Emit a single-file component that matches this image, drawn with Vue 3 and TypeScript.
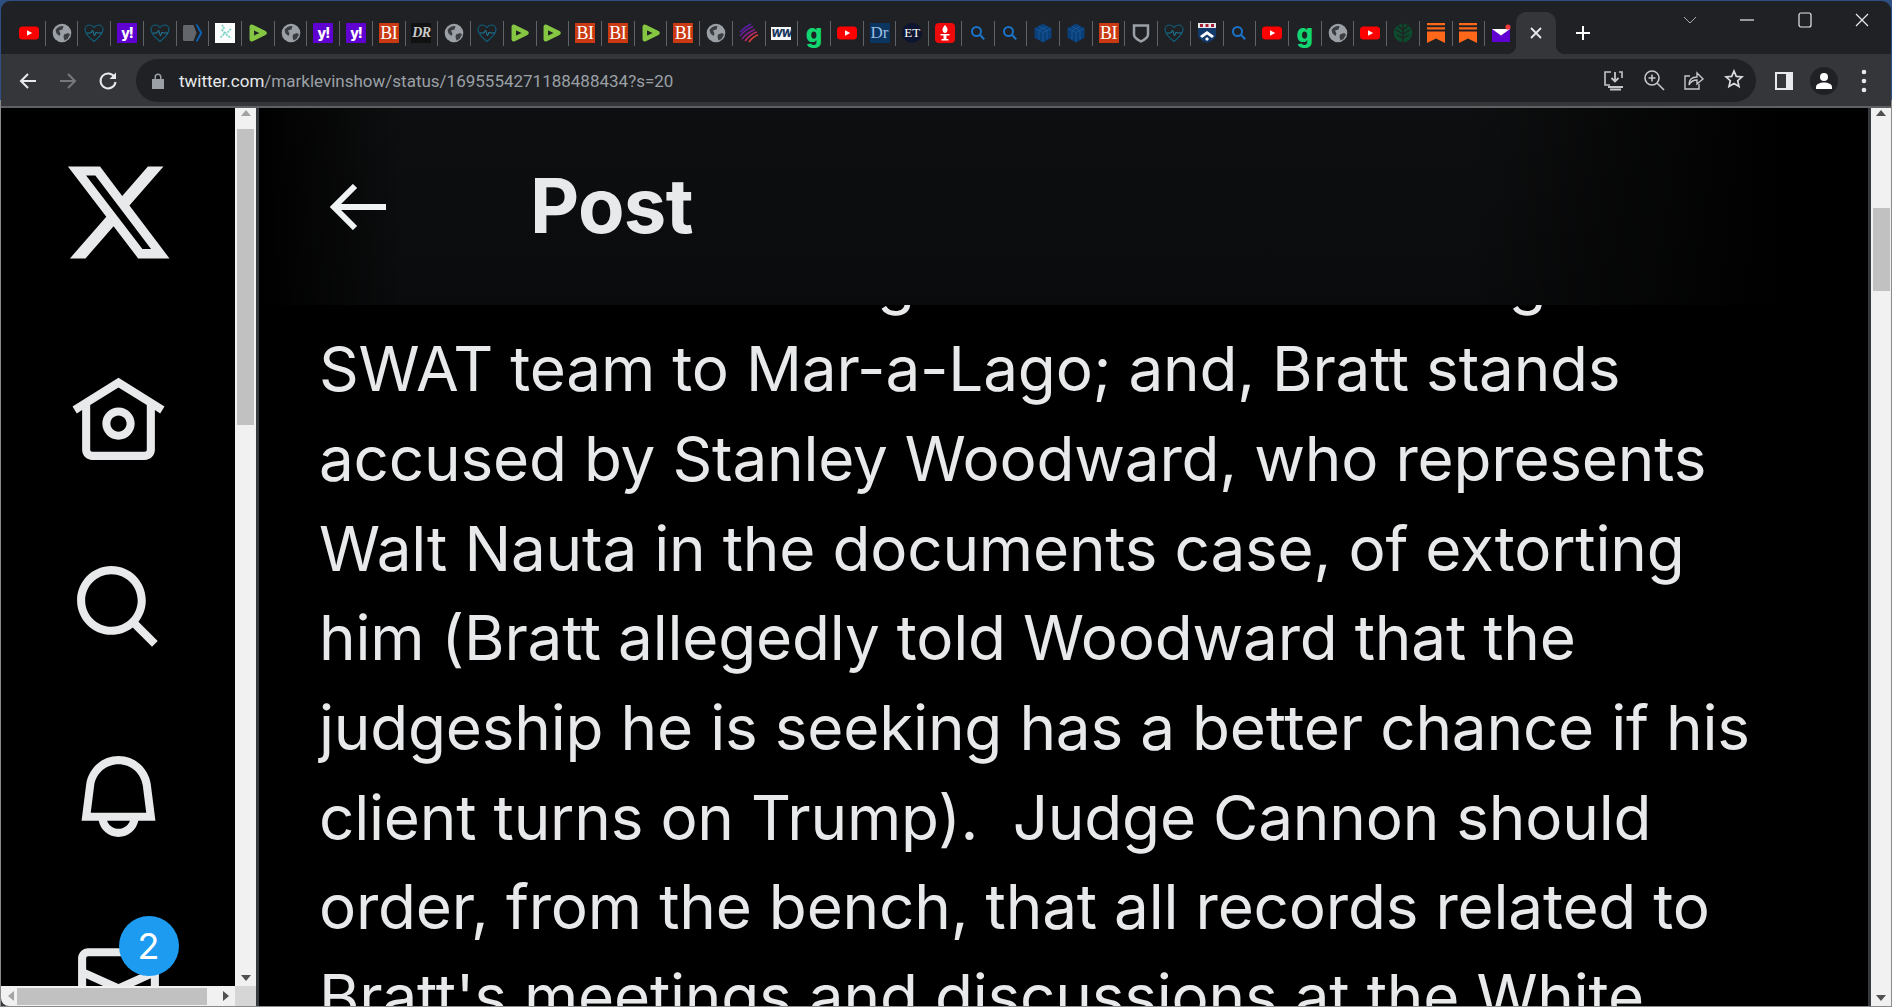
<script setup lang="ts">
// favicon strip, in tab order. Text logos are spans, the rest come from the symbols below.
const tabs: string[] = [
  'yt', 'globe', 'heart', 'yahoo', 'heart', 'arrow', 'crystal', 'rumble', 'globe', 'yahoo',
  'yahoo', 'bi', 'dr-mark', 'globe', 'heart', 'rumble', 'rumble', 'bi', 'bi', 'rumble',
  'bi', 'globe', 'swirl', 'ww', 'g', 'yt', 'dr', 'et', 'torch', 'search',
  'search', 'hex', 'hex', 'bi', 'shield', 'heart', 'crest', 'search', 'yt', 'g',
  'globe', 'yt', 'tree', 'bookmark', 'bookmark', 'mail',
]

const textLogos: Record<string, string> = {
  yahoo: 'y!',
  bi: 'BI',
  'dr-mark': 'DR',
  ww: 'WW',
  g: 'g',
  dr: 'Dr',
  et: 'ET',
}

const lines: string[] = [
  'in the Biden meeting and directed sending',
  'SWAT team to Mar-a-Lago; and, Bratt stands',
  'accused by Stanley Woodward, who represents',
  'Walt Nauta in the documents case, of extorting',
  'him (Bratt allegedly told Woodward that the',
  'judgeship he is seeking has a better chance if his',
  'client turns on Trump).  Judge Cannon should',
  'order, from the bench, that all records related to',
  "Bratt's meetings and discussions at the White",
]
</script>

<template>
  <div class="window">
    <svg class="defs" width="0" height="0" aria-hidden="true">
      <symbol id="fav-yt" viewBox="0 0 20 20">
        <rect x="0" y="3.5" width="20" height="13" rx="3.5" fill="#ff0000" />
        <path d="M8 7.2l5.2 2.8L8 12.8z" fill="#fff" />
      </symbol>
      <symbol id="fav-globe" viewBox="0 0 20 20">
        <circle cx="10" cy="10" r="9.300" fill="#9aa0a6" />
        <path d="M3.500 7c2-3 5-4.500 8-4l-1 3.500-3.500 1 1.500 3-1 2.500-3-2.500zM12 11.500l4-1.500 2 1.500-2.500 4.500-3 1.500-1-3.500z" fill="#3b3d41" />
      </symbol>
      <symbol id="fav-heart" viewBox="0 0 20 20">
        <path d="M10 18.500C5 14.500 1 10.500 1 6.500 1 4 3 2 5.500 2c2 0 3.500 1 4.500 2.500C11 3 12.500 2 14.500 2 17 2 19 4 19 6.500c0 4-4 8-9 12z" fill="none" stroke="#0f5f7c" stroke-width="1.200" />
        <path d="M3 10h4l1.500-3 2 6 1.500-4 1 1h5" fill="none" stroke="#1f7d9d" stroke-width="1" />
      </symbol>
      <symbol id="fav-arrow" viewBox="0 0 20 20">
        <path d="M1 3.500c0-.800.500-1.500 1.500-1.500h9l3 8-3 8h-9c-1 0-1.500-.700-1.500-1.500z" fill="#63666a" />
        <path d="M13.500 1.500l4.500 8.500-4.500 8.500h2l5-8.500-5-8.500z" fill="#0b62b4" />
      </symbol>
      <symbol id="fav-crystal" viewBox="0 0 20 20">
        <rect width="20" height="20" fill="#fdfdfd" />
        <path d="M7 2l2 3-2 2 3 3-3 3-2 2M16 6l-3 3-3 1 3 3 3 2" fill="none" stroke="#7fd3c6" stroke-width="1.800" stroke-dasharray="2 1" />
      </symbol>
      <symbol id="fav-rumble" viewBox="0 0 20 20">
        <path d="M3.800 3.800v12.400L16.500 10z" fill="#202124" stroke="#85c742" stroke-width="4.500" stroke-linejoin="round" />
      </symbol>
      <symbol id="fav-swirl" viewBox="0 0 20 20">
        <g fill="none" stroke-width="1.500">
          <path d="M1 9c4-4 7-6 11-8" stroke="#5b1fa8" />
          <path d="M1 13c4-5 9-8 13-9.500" stroke="#6a1f9c" />
          <path d="M3 16c4-5 9-8 13-9.500" stroke="#8a1f90" />
          <path d="M6 18c4-5 8-8 12-9" stroke="#c02868" />
          <path d="M10 19c3-4 5-6 9-7" stroke="#e0403a" />
        </g>
      </symbol>
      <symbol id="fav-torch" viewBox="0 0 20 20">
        <rect width="20" height="20" rx="4" fill="#ee0a0a" />
        <path d="M10 2c2 2 2.500 3.500 2.500 5 0 1.500-1 3-2.500 3S7.500 8.500 7.500 7c0-1.500.500-3 2.500-5zM5.500 11h9v1.500h-3V16h2v1.500h-7V16h2v-3.500h-3z" fill="#fff" />
      </symbol>
      <symbol id="fav-search" viewBox="0 0 20 20">
        <circle cx="8.500" cy="8.500" r="4.500" fill="none" stroke="#1a73c8" stroke-width="2" />
        <path d="M11.800 11.800l4.400 4.400" stroke="#1a73c8" stroke-width="2.200" />
      </symbol>
      <symbol id="fav-hex" viewBox="0 0 20 20">
        <path d="M10 .5l8.500 4.800v9.400L10 19.500l-8.500-4.800V5.300z" fill="#0b3f78" />
        <path d="M2 5.500l8 4 8-4M10 9.500V19M6 7.500v9M14 7.500v9M6 3.500l8 4M14 3.500l-8 4" fill="none" stroke="#1a5a9e" stroke-width=".900" />
      </symbol>
      <symbol id="fav-shield" viewBox="0 0 20 20">
        <path d="M3 2.500h14v9c0 3-3 5-7 7-4-2-7-4-7-7z" fill="none" stroke="#9aa0a6" stroke-width="2.500" />
      </symbol>
      <symbol id="fav-crest" viewBox="0 0 20 20">
        <path d="M1 0h18v12c0 4-5 6-9 8-4-2-9-4-9-8z" fill="#123a6b" />
        <path d="M1 0h18v5H1z" fill="#e8e8e8" />
        <path d="M3 1h3v3H3zM8.500 1h3v3h-3zM14 1h3v3h-3z" fill="#a31f34" />
        <path d="M3 13l7-5 7 5-2 2-5-3.500L5 15z" fill="#fff" />
        <path d="M10 14l2 2-2 2-2-2z" fill="#fff" />
      </symbol>
      <symbol id="fav-tree" viewBox="0 0 20 20">
        <circle cx="10" cy="10" r="9.300" fill="#0e4a2e" />
        <path d="M10 1v18M10 7L5 3M10 7l5-4M10 11L3 7M10 11l7-4M10 15L4 12M10 15l6-3" fill="none" stroke="#202124" stroke-width="1.300" />
      </symbol>
      <symbol id="fav-bookmark" viewBox="0 0 20 20">
        <path d="M1 0h18v2.300H1zM1 4.300h18v2.300H1zM1 8.500h18V20l-9-4.500L1 20z" fill="#ff6719" />
      </symbol>
      <symbol id="fav-mail" viewBox="0 0 20 20">
        <path d="M1 6h18v13H1z" fill="#5f01d1" />
        <path d="M1 6h18l-9 6.500z" fill="#fff" />
        <circle cx="17" cy="4" r="2.600" fill="#f0393c" />
      </symbol>
    </svg>

    <div class="tabstrip">
      <div class="tabs">
        <template v-for="(kind, i) in tabs" :key="i">
          <div class="tab">
            <span v-if="textLogos[kind]" class="logo-text" :class="'logo-' + kind">{{ textLogos[kind] }}</span>
            <svg v-else class="favicon" viewBox="0 0 20 20"><use :href="'#fav-' + kind" /></svg>
          </div>
          <span v-if="i < tabs.length - 1" class="tab-sep"></span>
        </template>
        <div class="tab-active">
          <svg width="14" height="14" viewBox="0 0 14 14"><path d="M2 2l10 10M12 2L2 12" stroke="#e8eaed" stroke-width="1.800" /></svg>
        </div>
        <div class="new-tab">
          <svg width="16" height="16" viewBox="0 0 16 16"><path d="M8 1v14M1 8h14" stroke="#fff" stroke-width="2" /></svg>
        </div>
      </div>
      <div class="win-controls">
        <div class="win-btn win-chevron">
          <svg width="14" height="8" viewBox="0 0 14 8"><path d="M1 1l6 6 6-6" fill="none" stroke="#a8abaf" stroke-width="1" /></svg>
        </div>
        <div class="win-btn">
          <svg width="14" height="2" viewBox="0 0 14 2"><path d="M0 1h14" stroke="#e8eaed" stroke-width="1.200" /></svg>
        </div>
        <div class="win-btn">
          <svg width="14" height="16" viewBox="0 0 14 16"><rect x="1" y="1" width="12" height="14" rx="2" fill="none" stroke="#e8eaed" stroke-width="1.200" /></svg>
        </div>
        <div class="win-btn">
          <svg width="14" height="14" viewBox="0 0 14 14"><path d="M1 1l12 12M13 1L1 13" stroke="#e8eaed" stroke-width="1.200" /></svg>
        </div>
      </div>
    </div>

    <div class="toolbar">
      <div class="nav-btn">
        <svg width="20" height="20" viewBox="0 0 20 20"><path d="M18 10H3M10 3l-7 7 7 7" fill="none" stroke="#e8eaed" stroke-width="2" /></svg>
      </div>
      <div class="nav-btn">
        <svg width="20" height="20" viewBox="0 0 20 20"><path d="M2 10h15M10 3l7 7-7 7" fill="none" stroke="#76787c" stroke-width="2" /></svg>
      </div>
      <div class="nav-btn">
        <svg width="20" height="20" viewBox="0 0 20 20"><path d="M16.500 6A7.500 7.500 0 1 0 17.500 11" fill="none" stroke="#e8eaed" stroke-width="2" /><path d="M18 1.500V8h-6.500z" fill="#e8eaed" /></svg>
      </div>
      <div class="omnibox">
        <svg class="lock" width="16" height="18" viewBox="0 0 16 18"><path d="M2 7h12v10H2zM4.500 7V5a3.500 3.500 0 0 1 7 0v2" fill="#9aa0a6" /><path d="M6 7V5a2 2 0 0 1 4 0v2z" fill="#202124" /></svg>
        <div class="url"><span class="host">twitter.com</span>/marklevinshow/status/1695554271188488434?s=20</div>
        <div class="omni-actions">
          <div class="omni-btn">
            <svg width="24" height="24" viewBox="0 0 24 24" fill="none" stroke="#c4c7ca" stroke-width="1.600"><path d="M9 3H3v13h5M17 3h3v6" /><path d="M13 3v9M9.500 9l3.500 3.500L16.500 9" stroke-width="1.800" /><path d="M6 18h15M8 20.500h11" stroke-width="2.200" /></svg>
          </div>
          <div class="omni-btn">
            <svg width="22" height="22" viewBox="0 0 22 22" fill="none" stroke="#c4c7ca" stroke-width="1.600"><circle cx="9" cy="9" r="7" /><path d="M14 14l7 7M9 5.500v7M5.500 9h7" /></svg>
          </div>
          <div class="omni-btn">
            <svg width="22" height="22" viewBox="0 0 22 22" fill="none" stroke="#c4c7ca" stroke-width="1.400"><path d="M7 7H2v13h14v-5" /><path d="M6 16c0-5 3-8 8-8V4l6 6-6 5v-4c-3 0-6 1-8 5z" /></svg>
          </div>
          <div class="omni-btn">
            <svg width="20" height="20" viewBox="0 0 20 20"><path d="M10 2l2.300 5.400 5.700.5-4.300 3.800 1.300 5.700-5-3-5 3 1.300-5.700L2 7.900l5.700-.5z" fill="none" stroke="#dadce0" stroke-width="1.700" /></svg>
          </div>
        </div>
      </div>
      <div class="tool-btn tool-first">
        <svg width="18" height="18" viewBox="0 0 18 18"><path d="M0 0h18v18H0z" fill="#e8eaed" /><path d="M2 2h9v14H2z" fill="#35363a" /></svg>
      </div>
      <div class="tool-btn">
        <div class="avatar">
          <svg width="18" height="18" viewBox="0 0 18 18"><circle cx="9" cy="5" r="4" fill="#fff" /><path d="M1 17v-2c0-3 4-4.500 8-4.500s8 1.500 8 4.500v2z" fill="#fff" /></svg>
        </div>
      </div>
      <div class="tool-btn">
        <svg width="6" height="24" viewBox="0 0 6 24" fill="#e8eaed"><circle cx="3" cy="3" r="2.300" /><circle cx="3" cy="12" r="2.300" /><circle cx="3" cy="21" r="2.300" /></svg>
      </div>
    </div>

    <div class="page">
      <aside class="side">
        <div class="side-body">
          <div class="side-content">
            <svg class="x-logo" viewBox="0 0 24 24"><path d="M18.244 2.250h3.308l-7.227 8.260 8.502 11.240H16.170l-5.214-6.817L4.990 21.750H1.680l7.730-8.835L1.254 2.250H8.080l4.713 6.231zm-1.161 17.520h1.833L7.084 4.126H5.117z" /></svg>
            <div class="nav-item">
              <svg viewBox="0 0 24 24"><path d="M12 9c-2.209 0-4 1.791-4 4s1.791 4 4 4 4-1.791 4-4-1.791-4-4-4zm0 6c-1.105 0-2-.895-2-2s.895-2 2-2 2 .895 2 2-.895 2-2 2zm0-13.304L.622 8.807l1.060 1.696L3 9.679V19.500C3 20.881 4.119 22 5.500 22h13c1.381 0 2.500-1.119 2.500-2.500V9.679l1.318.824 1.060-1.696L12 1.696zM19 19.500c0 .276-.224.5-.5.5h-13c-.276 0-.5-.224-.5-.5V8.429l7-4.375 7 4.375V19.500z" /></svg>
            </div>
            <div class="nav-item">
              <svg viewBox="0 0 24 24"><path d="M10.250 3.750c-3.590 0-6.500 2.910-6.500 6.500s2.910 6.500 6.500 6.500c1.795 0 3.419-.726 4.596-1.904 1.178-1.177 1.904-2.801 1.904-4.596 0-3.590-2.910-6.500-6.500-6.500zm-8.500 6.500c0-4.694 3.806-8.500 8.500-8.500s8.500 3.806 8.500 8.500c0 1.986-.682 3.815-1.824 5.262l4.781 4.781-1.414 1.414-4.781-4.781c-1.447 1.142-3.276 1.824-5.262 1.824-4.694 0-8.500-3.806-8.500-8.500z" /></svg>
            </div>
            <div class="nav-item">
              <svg viewBox="0 0 24 24"><path d="M19.993 9.042C19.480 5.017 16.054 2 11.996 2s-7.490 3.021-7.999 7.051L2.866 18H7.100c.463 2.282 2.481 4 4.900 4s4.437-1.718 4.900-4h4.236l-1.143-8.958zM12 20c-1.306 0-2.417-.835-2.829-2h5.658c-.412 1.165-1.523 2-2.829 2zm-6.866-4l.847-6.698C6.364 6.272 8.941 4 11.996 4s5.627 2.268 6.013 5.295L18.864 16H5.134z" /></svg>
            </div>
            <div class="nav-item">
              <svg viewBox="0 0 24 24"><path d="M1.998 5.500c0-1.381 1.119-2.500 2.500-2.500h15c1.381 0 2.500 1.119 2.500 2.500v13c0 1.381-1.119 2.500-2.500 2.500h-15c-1.381 0-2.500-1.119-2.500-2.500v-13zm2.500-.5c-.276 0-.5.224-.5.500v2.764l8 3.638 8-3.636V5.500c0-.276-.224-.5-.5-.5h-15zm15.500 5.463l-8 3.636-8-3.638V18.500c0 .276.224.5.5.5h15c.276 0 .5-.224.5-.5v-8.037z" /></svg>
              <span class="badge">2</span>
            </div>
          </div>
          <div class="vbar">
            <span class="arrow arrow-up light"></span>
            <div class="vbar-track"><div class="vthumb side-thumb"></div></div>
            <span class="arrow arrow-down"></span>
          </div>
        </div>
        <div class="hbar">
          <span class="arrow arrow-left"></span>
          <div class="hbar-track"><div class="hthumb"></div></div>
          <span class="arrow arrow-right"></span>
          <div class="corner"></div>
        </div>
      </aside>

      <main class="main">
        <header class="post-head">
          <svg class="back" viewBox="0 0 56 46"><path d="M56 23H4M25 2L4 23l21 21" fill="none" stroke="#eff3f4" stroke-width="6" /></svg>
          <h1>Post</h1>
        </header>
        <div class="tweet">
          <div v-for="line in lines" :key="line" class="line">{{ line }}</div>
        </div>
      </main>

      <div class="vbar page-bar">
        <span class="arrow arrow-up"></span>
        <div class="vbar-track"><div class="vthumb main-thumb"></div></div>
        <span class="arrow arrow-down"></span>
      </div>
    </div>
  </div>
</template>

<style>
html,
body {
  margin: 0;
  background: #8a8a8a;
  overflow: hidden;
}
</style>

<style scoped>
.window {
  box-sizing: border-box;
  width: 1892px;
  height: 1007px;
  padding: 1px 1px 1px 1px;
  display: flex;
  flex-direction: column;
  overflow: hidden;
  background: linear-gradient(#2e4f82 0, #2e4f82 100px, #8a8a8a 100px);
  font-family: Inter, "Liberation Sans", sans-serif;
}

.defs {
  position: absolute;
}

/* tab strip */
.tabstrip {
  flex: none;
  height: 53px;
  display: flex;
  align-items: flex-start;
  background: #202124;
  border-radius: 9px 9px 0 0;
}

.tabs {
  display: flex;
  align-items: center;
  height: 42px;
  margin-top: 11px;
  padding-left: 12px;
}

.tab {
  flex: none;
  width: 31.72px;
  height: 42px;
  display: flex;
  align-items: center;
  justify-content: center;
}

.tab-sep {
  flex: none;
  width: 1px;
  height: 25px;
  background: #5f6368;
}

.favicon {
  width: 20px;
  height: 20px;
}

.logo-text {
  flex: none;
  width: 20px;
  height: 20px;
  display: flex;
  align-items: center;
  justify-content: center;
  line-height: 20px;
  white-space: nowrap;
}

.logo-yahoo {
  background: #5f01d1;
  color: #fff;
  font-weight: 800;
  font-size: 14px;
  letter-spacing: -1px;
}

.logo-bi {
  background: #c93a12;
  color: #fff;
  font-family: "Liberation Serif", serif;
  font-size: 18px;
  letter-spacing: -0.5px;
  line-height: 18px;
}

.logo-dr-mark {
  color: #c9c9c9;
  background: #111;
  font-family: "Liberation Serif", serif;
  font-style: italic;
  font-weight: 700;
  font-size: 14px;
  letter-spacing: -0.5px;
}

.logo-ww {
  height: 13px;
  line-height: 13px;
  background: #f4f6f8;
  color: #16355c;
  font-weight: 800;
  font-style: italic;
  font-size: 10.500px;
  letter-spacing: -1px;
}

.logo-g {
  color: #12d66f;
  font-weight: 800;
  font-size: 26px;
  height: 28px;
  line-height: 24px;
}

.logo-dr {
  background: #0a3560;
  color: #9dbde0;
  font-family: "Liberation Serif", serif;
  font-size: 17px;
}

.logo-et {
  background: #0d1530;
  border-radius: 50%;
  color: #fff;
  font-family: "Liberation Serif", serif;
  font-size: 13px;
}

.tab-active {
  flex: none;
  position: relative;
  width: 40px;
  height: 42px;
  margin-left: -1px;
  display: flex;
  align-items: center;
  justify-content: center;
  background: #35363a;
  border-radius: 10px 10px 0 0;
}

.tab-active::before,
.tab-active::after {
  content: "";
  position: absolute;
  bottom: 0;
  width: 9px;
  height: 9px;
  background: #35363a;
  -webkit-mask: radial-gradient(circle at 0 0, transparent 9px, #000 9.5px);
  mask: radial-gradient(circle at 0 0, transparent 9px, #000 9.5px);
}

.tab-active::before {
  left: -9px;
}

.tab-active::after {
  right: -9px;
  -webkit-mask: radial-gradient(circle at 100% 0, transparent 9px, #000 9.5px);
  mask: radial-gradient(circle at 100% 0, transparent 9px, #000 9.5px);
}

.new-tab {
  flex: none;
  width: 28px;
  margin-left: 13px;
  display: flex;
  justify-content: center;
}

.win-controls {
  margin-left: auto;
  display: flex;
}

.win-btn {
  width: 57.5px;
  height: 38px;
  display: flex;
  align-items: center;
  justify-content: center;
}

/* toolbar */
.toolbar {
  flex: none;
  box-sizing: border-box;
  height: 54px;
  padding: 6px 0 5px 7px;
  display: flex;
  align-items: center;
  background: #35363a;
  border-bottom: 2px solid #5f6064;
}

.nav-btn {
  flex: none;
  width: 40px;
  display: flex;
  justify-content: center;
}

.omnibox {
  flex: none;
  box-sizing: border-box;
  width: 1620px;
  height: 43px;
  margin-left: 8px;
  padding: 0 2px 0 14px;
  display: flex;
  align-items: center;
  background: #202124;
  border-radius: 22px;
}

.lock {
  flex: none;
}

.url {
  margin-left: 13px;
  color: #9aa0a6;
  font-family: Roboto, "Liberation Sans", sans-serif;
  font-size: 17px;
  white-space: nowrap;
}

.host {
  color: #e8eaed;
}

.omni-actions {
  margin-left: auto;
  display: flex;
}

.omni-btn {
  width: 40px;
  display: flex;
  justify-content: center;
}

.tool-btn {
  flex: none;
  width: 40px;
  display: flex;
  justify-content: center;
  align-items: center;
}

.tool-first {
  margin-left: 8px;
}

.avatar {
  width: 28px;
  height: 28px;
  display: flex;
  align-items: center;
  justify-content: center;
  background: #202124;
  border-radius: 50%;
}

/* page */
.page {
  flex: 1;
  min-height: 0;
  display: flex;
  background: #36393d;
}

.side {
  flex: none;
  width: 255px;
  display: flex;
  flex-direction: column;
  border-radius: 0 0 0 8px;
  overflow: hidden;
}

.side-body {
  flex: 1;
  min-height: 0;
  display: flex;
}

.side-content {
  flex: 1;
  min-width: 0;
  padding-top: 48px;
  display: flex;
  flex-direction: column;
  align-items: center;
  background: #000;
  overflow: hidden;
}

.side-content svg {
  fill: #e7e9ea;
}

.x-logo {
  flex: none;
  width: 113px;
  height: 113px;
  margin-bottom: 102px;
}

.nav-item {
  flex: none;
  position: relative;
  width: 97px;
  height: 188.3px;
}

.nav-item svg {
  width: 97px;
  height: 97px;
  display: block;
}

.badge {
  position: absolute;
  left: 49px;
  top: -20px;
  width: 60px;
  height: 60px;
  display: flex;
  align-items: center;
  justify-content: center;
  background: #1d9bf0;
  border-radius: 50%;
  color: #fff;
  font-size: 36px;
  font-weight: 400;
}

.vbar {
  flex: none;
  position: relative;
  width: 21px;
  display: flex;
  flex-direction: column;
  align-items: center;
  background: #f1f1f1;
}

.vbar-track {
  flex: 1;
  width: 100%;
  min-height: 0;
}

.vthumb {
  width: 17px;
  margin: 0 auto;
  background: #c1c1c1;
}

.side-thumb {
  height: 296px;
  margin-top: 9px;
}

.main-thumb {
  height: 83px;
  margin-top: 88px;
}

.hbar {
  flex: none;
  height: 20px;
  display: flex;
  align-items: center;
  background: #f1f1f1;
}

.hbar-track {
  flex: 1;
  height: 100%;
  display: flex;
  align-items: center;
}

.hthumb {
  width: 190px;
  height: 17px;
  margin-left: 3px;
  background: #c1c1c1;
}

.corner {
  flex: none;
  width: 21px;
  height: 100%;
  background: #d6d6d6;
}

.arrow {
  flex: none;
  width: 0;
  height: 0;
  display: block;
  border: 5px solid transparent;
}

.arrow-up {
  margin-top: 2px;
  margin-bottom: 4px;
  border-top-width: 0;
  border-bottom: 6px solid #505050;
}

.arrow-up.light {
  border-bottom-color: #a3a3a3;
}

.arrow-down {
  margin-bottom: 5px;
  border-bottom-width: 0;
  border-top: 6px solid #505050;
  margin-top: 4px;
}

.arrow-left {
  margin-left: 7px;
  border-left-width: 0;
  border-right: 6px solid #a3a3a3;
}

.arrow-right {
  margin-right: 6px;
  border-right-width: 0;
  border-left: 6px solid #505050;
}

/* post column */
.main {
  flex: 1;
  min-width: 0;
  position: relative;
  margin: 0 3px;
  background: #000;
  overflow: hidden;
}

.post-head {
  position: absolute;
  top: 0;
  left: 0;
  right: 0;
  height: 197px;
  display: flex;
  align-items: center;
  background:
    linear-gradient(90deg, #000 0, rgba(0, 0, 0, 0) 9%, rgba(0, 0, 0, 0) 75%, #000 95%),
    linear-gradient(180deg, #0e0f10 0, #0a0b0c 100%);
  background-color: #0b0c0d;
}

.back {
  flex: none;
  width: 56px;
  height: 46px;
  margin-left: 71px;
}

.post-head h1 {
  margin: -4px 0 0 144px;
  color: #e7e9ea;
  font-size: 76px;
  font-weight: 700;
  line-height: 1;
  letter-spacing: -0.7px;
}

.tweet {
  padding: 126.5px 0 0 60px;
  color: #e7e9ea;
  font-size: 62px;
  font-weight: 400;
  line-height: 89.7px;
  letter-spacing: -0.2px;
  white-space: pre;
}

.page-bar {
  width: 20px;
}
</style>
